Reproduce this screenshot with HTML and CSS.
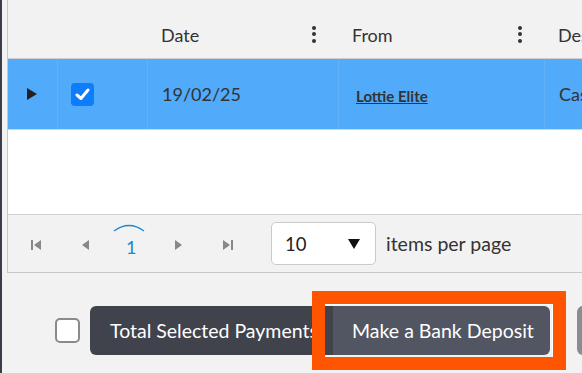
FILE: index.html
```html
<!DOCTYPE html>
<html><head>
<meta charset="utf-8">
<meta name="viewport" content="width=device-width, initial-scale=1.0">
<title>Payments</title>
<link rel="stylesheet" href="styles.css">
</head>
<body>
<div class="frame">
  <div class="grid">
    <div class="ghead">
      <div class="cell"></div>
      <div class="cell"></div>
      <div class="cell hcell"><span>Date</span><span class="kebab"><i></i><i></i><i></i></span></div>
      <div class="cell hcell"><span>From</span><span class="kebab"><i></i><i></i><i></i></span></div>
      <div class="cell hcell"><span>Des</span></div>
    </div>
    <div class="grow selected">
      <div class="cell"><span class="expand"></span></div>
      <div class="cell"><span class="cbox checked">
        <svg width="15" height="13" viewBox="0 0 15 13"><path d="M2 7 L6 10.5 L13 2" fill="none" stroke="#fff" stroke-width="3" stroke-linecap="round" stroke-linejoin="round"/></svg>
      </span></div>
      <div class="cell">19/02/25</div>
      <div class="cell"><a class="link" href="#">Lottie Elite</a></div>
      <div class="cell">Cas</div>
    </div>
    <div class="gempty">
      <div></div><div></div><div></div><div></div><div></div>
    </div>
    <div class="pager">
      <span class="pbtn"><svg width="12" height="12" viewBox="0 0 12 12"><rect x="1" y="1" width="2" height="10" fill="#888"/><path d="M11 1 L4 6 L11 11 Z" fill="#888"/></svg></span>
      <span class="pbtn"><svg width="10" height="12" viewBox="0 0 10 12"><path d="M9 1 L2 6 L9 11 Z" fill="#888"/></svg></span>
      <span class="pnum">
        <svg class="arc" width="34" height="8" viewBox="0 0 34 8"><path d="M2 7 Q17 -4 32 7" fill="none" stroke="#1b87d0" stroke-width="1.3"/></svg>
        1
      </span>
      <span class="pbtn"><svg width="10" height="12" viewBox="0 0 10 12"><path d="M1 1 L8 6 L1 11 Z" fill="#888"/></svg></span>
      <span class="pbtn"><svg width="12" height="12" viewBox="0 0 12 12"><path d="M1 1 L8 6 L1 11 Z" fill="#888"/><rect x="9" y="1" width="2" height="10" fill="#888"/></svg></span>
      <span class="psize"><span>10</span><svg class="caret" width="12" height="10" viewBox="0 0 12 10"><path d="M0 0 H12 L6 10 Z" fill="#111"/></svg></span>
      <span class="plabel">items per page</span>
    </div>
  </div>

  <div class="actions">
    <span class="cbox empty"></span>
    <div class="btngroup">
      <button class="btn dark">Total Selected Payments</button>
      <button class="btn mid">Make a Bank Deposit</button>
    </div>
    <button class="btn grey" aria-label="More"></button>
    <div class="highlight"></div>
  </div>
</div>
</body>
</html>
```
FILE: styles.css
```css
html, body {margin: 0; padding: 0;}
body {
  width: 582px;
  height: 373px;
  overflow: hidden;
  background: #f2f2f2;
  font-family: Lato, "Open Sans", sans-serif;
  color: #333;
}
.frame {
  border-left: 2px solid #3b3e47;
  padding-left: 5px;
  height: 373px;
  box-sizing: border-box;
}

/* grid */
.grid {
  width: 700px;
  border-left: 1px solid #c8c8c8;
  border-bottom: 1px solid #c8c8c8;
}
.ghead, .grow, .gempty {
  display: grid;
  grid-template-columns: 49px 90px 191px 206px 1fr;
}
.ghead {
  height: 58px;
  border-bottom: 1px solid #cfcfcf;
}
.cell {
  display: flex;
  align-items: center;
  padding-left: 14px;
  font-size: 18px;
  white-space: nowrap;
}
.hcell {
  padding-top: 12px;
  justify-content: space-between;
  padding-right: 22px;
}
.kebab {
  display: flex;
  flex-direction: column;
  gap: 2.5px;
  margin-top: -2px;
}
.kebab i {
  width: 4px;
  height: 4px;
  border-radius: 50%;
  background: #333;
}
.grow {
  height: 70px;
  border-bottom: 1px solid #d6d6d6;
}
.grow .cell + .cell {border-left: 1px solid rgba(255,255,255,0.1);}
.selected {background: #51aafa;}
.grow .cell:first-child {padding-left: 19px;}
.expand {
  width: 0; height: 0;
  border-top: 6px solid transparent;
  border-bottom: 6px solid transparent;
  border-left: 10px solid #222;
}
.grow .cell:nth-child(2) {padding-left: 13px;}
.cbox {
  display: inline-flex;
  align-items: center;
  justify-content: center;
  width: 23px;
  height: 23px;
  box-sizing: border-box;
  border-radius: 4px;
  flex-shrink: 0;
}
.checked {background: #0d7dfb;}
.link {
  color: #333;
  font-weight: bold;
  font-size: 15px;
  text-decoration: underline;
  margin: 4px 0 0 3px;
}
.gempty {
  height: 84px;
  background: #fff;
  border-bottom: 1px solid #d0d0d0;
}

/* pager */
.pager {
  height: 57px;
  display: flex;
  align-items: center;
  padding-left: 22px;
}
.pbtn {
  width: 48px;
  display: flex;
  align-items: center;
  padding-top: 2px;
}
.pbtn:nth-child(2) {padding-left: 2px; width: 46px;}
.pnum {
  position: relative;
  width: 48px;
  font-size: 18px;
  color: #1b87d0;
  margin-left: -8px;
  text-indent: 8px;
  padding-top: 6px;
}
.pnum .arc {
  position: absolute;
  left: -6px;
  top: -6px;
}
.pbtn:nth-child(4) {margin-left: 8px;}
.psize {
  margin-left: 1px;
  width: 105px;
  height: 43px;
  box-sizing: border-box;
  background: #fff;
  border: 1px solid #cacaca;
  border-radius: 5px;
  display: flex;
  align-items: center;
  justify-content: space-between;
  padding: 0 15px 0 13px;
  font-size: 18.5px;
  color: #222;
}
.caret {margin-top: 1px;}
.plabel {
  margin-left: 10px;
  font-size: 19.5px;
  color: #333;
}

/* actions */
.actions {
  position: relative;
  display: flex;
  align-items: center;
  margin-top: 33px;
  padding-left: 48px;
}
.empty {
  width: 25px;
  height: 25px;
  background: #fff;
  border: 2px solid #8a8a8a;
  border-radius: 5px;
  margin-right: 10px;
}
.btngroup {
  display: flex;
  flex-shrink: 0;
  border-radius: 6px;
  overflow: hidden;
}
.btn {
  flex-shrink: 0;
  height: 49px;
  border: 0;
  font-family: Lato, "Open Sans", sans-serif;
  font-size: 19.5px;
  color: #fff;
  white-space: nowrap;
  padding: 0 19px;
  overflow: hidden;
}
.dark {background: #40434c; width: 243px; text-align: left; padding-left: 20px; padding-right: 0;}
.mid {background: #525562; width: 217px; text-align: left;}
.grey {
  margin-left: 27px;
  width: 60px;
  background: #8b8c92;
  border-radius: 6px;
}
.highlight {
  position: absolute;
  left: 305px;
  top: -15px;
  width: 254px;
  height: 79px;
  box-sizing: border-box;
  border: 13px solid #ff5500;
  box-shadow: inset -1px 1px 0 #fff;
}
```
